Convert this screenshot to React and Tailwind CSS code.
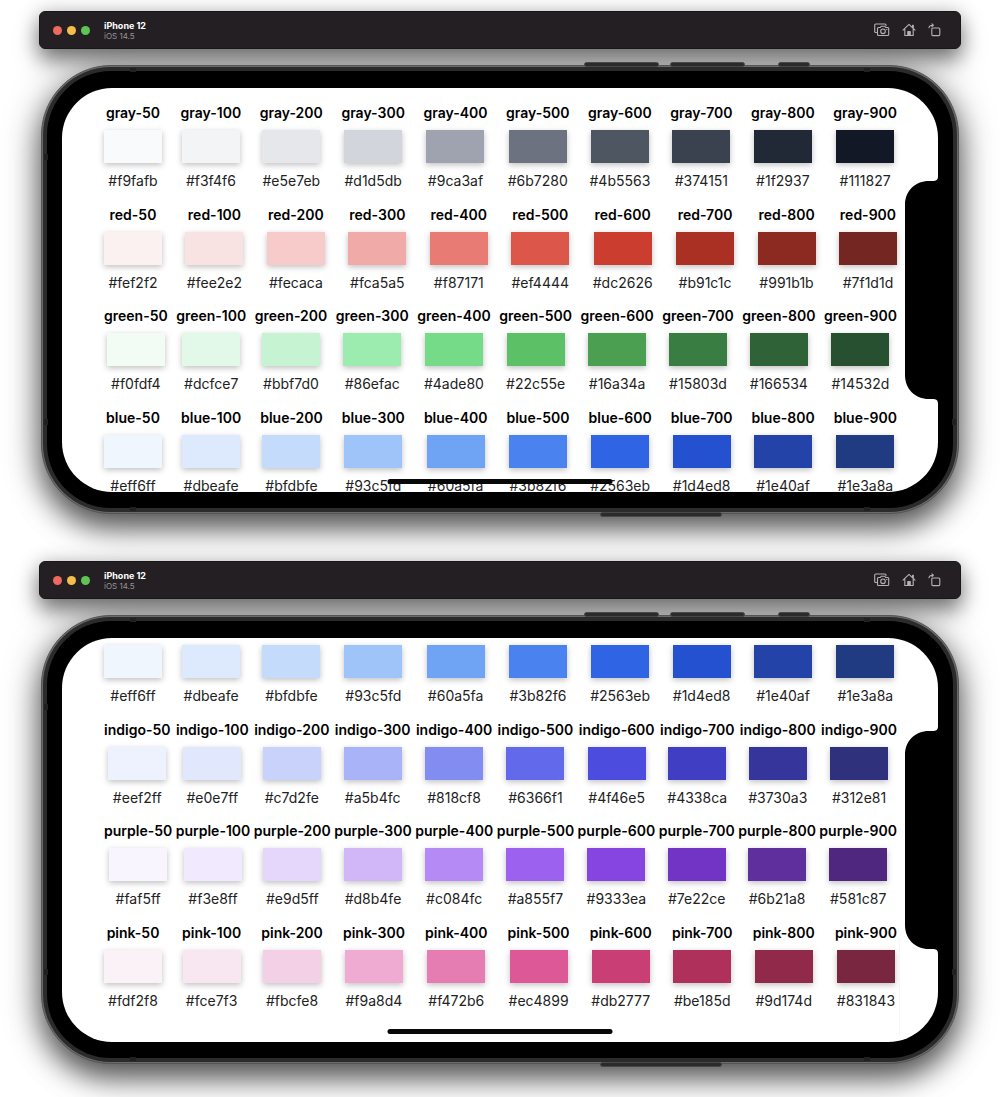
import React from "react";

const SHADES = ["50", "100", "200", "300", "400", "500", "600", "700", "800", "900"];

const PALETTE = {
  gray: {
    hex: ["#f9fafb", "#f3f4f6", "#e5e7eb", "#d1d5db", "#9ca3af", "#6b7280", "#4b5563", "#374151", "#1f2937", "#111827"],
    fill: ["bg-[#f9fafc]", "bg-[#f3f4f6]", "bg-[#e5e7ea]", "bg-[#d2d5dc]", "bg-[#9ea3af]", "bg-[#6c7280]", "bg-[#4e5662]", "bg-[#3a414f]", "bg-[#212936]", "bg-[#121826]"],
  },
  red: {
    hex: ["#fef2f2", "#fee2e2", "#fecaca", "#fca5a5", "#f87171", "#ef4444", "#dc2626", "#b91c1c", "#991b1b", "#7f1d1d"],
    fill: ["bg-[#fbf1f0]", "bg-[#f9e3e2]", "bg-[#f6cbca]", "bg-[#f0aaa7]", "bg-[#e87c75]", "bg-[#dd564a]", "bg-[#cb3e2f]", "bg-[#a93022]", "bg-[#8c2a22]", "bg-[#742722]"],
  },
  green: {
    hex: ["#f0fdf4", "#dcfce7", "#bbf7d0", "#86efac", "#4ade80", "#22c55e", "#16a34a", "#15803d", "#166534", "#14532d"],
    fill: ["bg-[#f2fcf5]", "bg-[#e2f8e8]", "bg-[#c6f3d2]", "bg-[#9cebaf]", "bg-[#76db89]", "bg-[#5bc066]", "bg-[#4a9f50]", "bg-[#3a7d42]", "bg-[#2f6337]", "bg-[#26502f]"],
  },
  blue: {
    hex: ["#eff6ff", "#dbeafe", "#bfdbfe", "#93c5fd", "#60a5fa", "#3b82f6", "#2563eb", "#1d4ed8", "#1e40af", "#1e3a8a"],
    fill: ["bg-[#eff6fe]", "bg-[#dde9fc]", "bg-[#c4dbfc]", "bg-[#9ec4f9]", "bg-[#6fa4f5]", "bg-[#4a82f0]", "bg-[#2f65e4]", "bg-[#2451d0]", "bg-[#2343a8]", "bg-[#213b83]"],
  },
  indigo: {
    hex: ["#eef2ff", "#e0e7ff", "#c7d2fe", "#a5b4fc", "#818cf8", "#6366f1", "#4f46e5", "#4338ca", "#3730a3", "#312e81"],
    fill: ["bg-[#eef2fe]", "bg-[#e1e7fd]", "bg-[#c8d2fb]", "bg-[#a8b4f7]", "bg-[#838df1]", "bg-[#6269eb]", "bg-[#4c4cde]", "bg-[#403fc3]", "bg-[#35359c]", "bg-[#2f317c]"],
  },
  purple: {
    hex: ["#faf5ff", "#f3e8ff", "#e9d5ff", "#d8b4fe", "#c084fc", "#a855f7", "#9333ea", "#7e22ce", "#6b21a8", "#581c87"],
    fill: ["bg-[#f9f5fe]", "bg-[#f1e9fd]", "bg-[#e5d7fb]", "bg-[#d1b6f8]", "bg-[#b68af5]", "bg-[#9c61ee]", "bg-[#8644e0]", "bg-[#7234c5]", "bg-[#602f9e]", "bg-[#50277f]"],
  },
  pink: {
    hex: ["#fdf2f8", "#fce7f3", "#fbcfe8", "#f9a8d4", "#f472b6", "#ec4899", "#db2777", "#be185d", "#9d174d", "#831843"],
    fill: ["bg-[#fbf2f7]", "bg-[#f8e7f1]", "bg-[#f4d0e6]", "bg-[#efabd1]", "bg-[#e57db3]", "bg-[#dc5897]", "bg-[#c93f75]", "bg-[#af305a]", "bg-[#90294a]", "bg-[#792641]"],
  },
};

function Swatch({ name, hex, fill }) {
  return (
    <li className="flex flex-col items-center">
      <span className="text-sm leading-5 font-semibold text-black">{name}</span>
      <span className={`mt-[7px] h-[33px] w-[58px] shadow-[0_2px_6px_rgba(0,0,0,0.25)] ${fill}`} />
      <span className="mt-2 text-sm leading-5 text-[#222]">{hex}</span>
    </li>
  );
}

function ColorRow({ color }) {
  const { hex, fill } = PALETTE[color];
  return (
    <ul className="flex flex-1 justify-between">
      {SHADES.map((shade, i) => (
        <Swatch key={shade} name={`${color}-${shade}`} hex={hex[i]} fill={fill[i]} />
      ))}
    </ul>
  );
}

const stroke = { fill: "none", stroke: "currentColor", strokeWidth: 1.1, strokeLinejoin: "round", strokeLinecap: "round" };

function TitleBar() {
  return (
    <header className="relative z-10 flex h-[38px] items-center rounded-md border border-[#17171a] bg-[#241f23] pr-[18px] pl-[13px]">
      <div className="flex gap-[5px]">
        <button aria-label="Close" className="size-[9px] rounded-full bg-[#ed6a5f]" />
        <button aria-label="Minimize" className="size-[9px] rounded-full bg-[#f5be4b]" />
        <button aria-label="Zoom" className="size-[9px] rounded-full bg-[#5fc453]" />
      </div>
      <div className="ml-[14px] flex flex-1 flex-col">
        <span className="text-[9px] leading-[11px] font-bold text-white">iPhone 12</span>
        <span className="text-[8px] leading-[10px] text-[#97949a]">iOS 14.5</span>
      </div>
      <div className="flex items-center gap-3 text-[#b5b2b5]">
        <button aria-label="Screenshot">
          <svg className="h-[14px] w-4" viewBox="0 0 16 14" {...stroke}>
            <path d="M2.500 9.500h-.8a1 1 0 0 1-1-1V2a1 1 0 0 1 1-1H11a1 1 0 0 1 1 1v.6" />
            <path d="M4.500 4.500h1.800l.9-1.300h3.600l.9 1.300h2a1 1 0 0 1 1 1v6a1 1 0 0 1-1 1H4.500a1 1 0 0 1-1-1v-6a1 1 0 0 1 1-1Z" />
            <circle cx="9" cy="8.3" r="2.3" />
            <path d="M12.700 6.400h.2" />
          </svg>
        </button>
        <button aria-label="Home">
          <svg className="size-[14px]" viewBox="0 0 14 14" {...stroke}>
            <path d="M1 7.200 7 1.400l6 5.800M2.800 6v6.500h8.400V6M10.600 4.600V2.200h.7v3" />
            <path d="M5.800 12.400V8.600h2.400v3.800Z" fill="currentColor" />
          </svg>
        </button>
        <button aria-label="Rotate">
          <svg className="size-[14px]" viewBox="0 0 14 14" {...stroke}>
            <rect x="3.8" y="5" width="8" height="7.6" rx="1" />
            <path d="M1 4.800C1.100 3 2.400 2.200 5 2.200M3.900.8 5.400 2.200 3.900 3.700" />
          </svg>
        </button>
      </div>
    </header>
  );
}

function Hardware() {
  const key = "absolute h-[5px] rounded-sm border border-[#484848] bg-[#2b2b2b]";
  const band = "absolute bg-[#202020]";
  return (
    <>
      <span className={`${key} -top-1 left-[59.2%] w-[75px]`} />
      <span className={`${key} -top-1 left-[68.6%] w-[75px]`} />
      <span className={`${key} -top-1 left-[80.4%] w-8`} />
      <span className={`${key} -bottom-1 left-[60.9%] w-[122px]`} />
      <span className={`${band} top-[2px] left-[88px] h-1 w-[6px]`} />
      <span className={`${band} top-[2px] right-[88px] h-1 w-[6px]`} />
      <span className={`${band} bottom-[2px] left-[88px] h-1 w-[6px]`} />
      <span className={`${band} right-[88px] bottom-[2px] h-1 w-[6px]`} />
      <span className={`${band} top-[88px] left-[2px] h-[6px] w-1`} />
      <span className={`${band} bottom-[88px] left-[2px] h-[6px] w-1`} />
      <span className={`${band} right-[2px] bottom-[88px] h-[6px] w-1`} />
    </>
  );
}

function Simulator({ colors, offset, scrollbar }) {
  return (
    <section>
      <div className="rounded-md shadow-[0_12px_22px_rgba(0,0,0,0.5),0_0_20px_rgba(0,0,0,0.18)]">
        <TitleBar />
      </div>
      <div className="relative mx-[2px] mt-4 rounded-[70px] border border-[#555] bg-[#6a6a6a] p-px shadow-[0_14px_28px_rgba(0,0,0,0.6),0_4px_40px_rgba(0,0,0,0.28)]">
        <div className="rounded-[68px] bg-[#2b2b2b] p-1">
          <div className="rounded-[64px] bg-black px-[15px] pt-[17px] pb-4">
            <main className="relative h-[404px] overflow-hidden rounded-[50px] bg-white">
              <div className={`mr-[41px] ml-[42px] flex h-[406px] flex-col ${offset}`}>
                {colors.map((color) => (
                  <ColorRow key={color} color={color} />
                ))}
              </div>
              {scrollbar && <span className="absolute right-[38px] bottom-2 h-[96px] w-px bg-[#f6f6f6]" />}
              <svg className="absolute top-[88px] right-0 h-[228px] w-[34px]" viewBox="0 0 34 228">
                <path d="M34 0C34 4 32.500 5 28 5H25C11 5 1 15 1 29V199C1 213 11 223 25 223H28C32.500 223 34 224 34 228Z" />
              </svg>
              <span className="absolute bottom-2 left-1/2 h-[5px] w-[225px] -translate-x-1/2 rounded-full bg-[#080808]" />
            </main>
          </div>
        </div>
        <Hardware />
      </div>
    </section>
  );
}

export default function App() {
  return (
    <div className="flex min-h-screen flex-col gap-[47px] overflow-hidden bg-white px-[39px] pt-[11px] pb-[33px] font-['Inter',sans-serif]">
      <Simulator colors={["gray", "red", "green", "blue"]} offset="mt-[15px]" />
      <Simulator colors={["blue", "indigo", "purple", "pink"]} offset="-mt-5" scrollbar />
    </div>
  );
}
